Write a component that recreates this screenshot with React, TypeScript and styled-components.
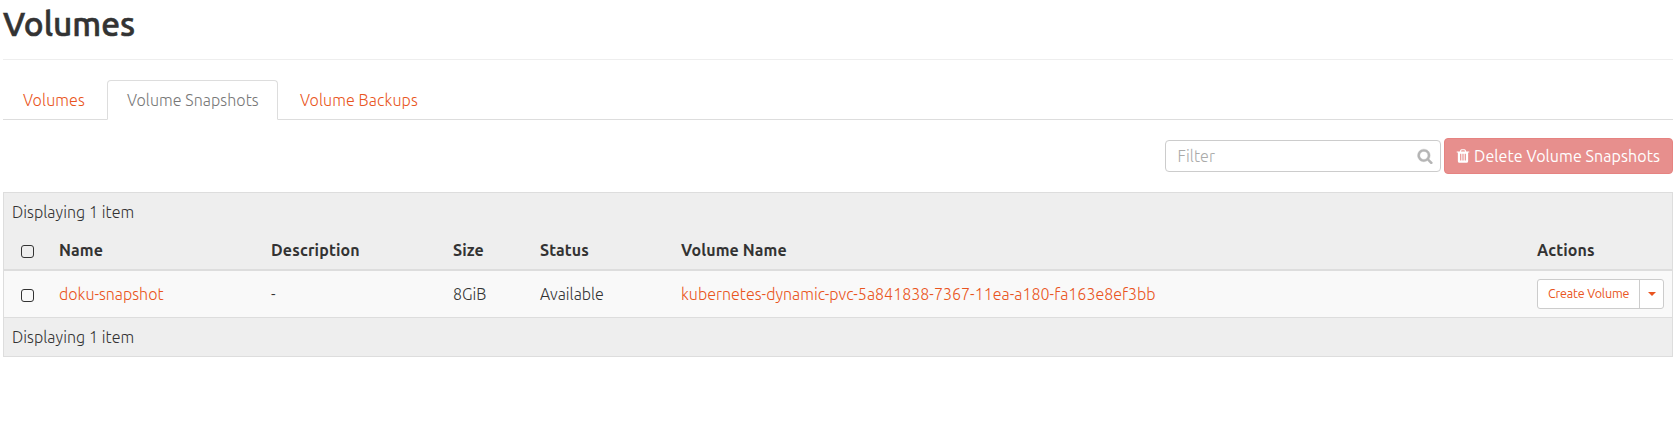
import React from "react";
import styled, { createGlobalStyle } from "styled-components";

const GlobalStyle = createGlobalStyle`
  * { box-sizing: border-box; }
  body {
    margin: 0;
    background: #fff;
    color: #333;
    font-family: Ubuntu, "Noto Sans", "Open Sans", sans-serif;
    font-size: 16px;
    font-weight: 300;
    line-height: 22px;
  }
`;

const Page = styled.main`
  padding: 0 2px 0 3px;
`;

const PageHeader = styled.header`
  height: 60px;
  padding-top: 4px;
  border-bottom: 1px solid #eee;
`;

const Title = styled.h1`
  margin: 0;
  font-size: 33.5px;
  font-weight: 500;
  line-height: 40px;
  -webkit-text-stroke: 0.6px #333;
`;

const Text = styled.span<{ $track?: number }>`
  display: inline-block;
  white-space: nowrap;
  letter-spacing: ${(p) => p.$track ?? 0}px;
`;

const Tabs = styled.nav`
  display: flex;
  gap: 2px;
  height: 40px;
  margin-top: 20px;
  border-bottom: 1px solid #ddd;
`;

const Tab = styled.a<{ $active?: boolean; $width: number }>`
  width: ${(p) => p.$width}px;
  height: 40px;
  padding: 8px 0 8px 19px;
  border: 1px solid ${(p) => (p.$active ? "#ddd" : "transparent")};
  border-bottom-color: ${(p) => (p.$active ? "#fff" : "transparent")};
  border-radius: 4px 4px 0 0;
  background: ${(p) => (p.$active ? "#fff" : "transparent")};
  background-clip: padding-box;
  color: ${(p) => (p.$active ? "#777" : "#e95420")};
`;

const Toolbar = styled.div`
  display: flex;
  justify-content: flex-end;
  align-items: center;
  gap: 3px;
  height: 36px;
  margin: 18px 0;
`;

const FilterBox = styled.div`
  display: flex;
  align-items: center;
  justify-content: space-between;
  width: 276px;
  height: 32px;
  padding: 0 7.5px 0 11.5px;
  border: 1px solid #ccc;
  border-radius: 4px;
`;

const FilterText = styled(Text)`
  color: #aaa;
`;

const SearchIcon = styled.svg`
  width: 16px;
  height: 16px;
  fill: #b5b5b5;
  stroke: #b5b5b5;
  stroke-width: 40px;
`;

const DeleteButton = styled.button`
  display: flex;
  align-items: center;
  width: 229px;
  height: 36px;
  padding: 0 0 0 12px;
  border: 1px solid #e68381;
  border-radius: 4px;
  background: #e78f8d;
  color: #fff;
  font: inherit;
  font-weight: 400;
`;

const TrashIcon = styled.svg`
  width: 16px;
  height: 16px;
  margin: 0 3px 0 -2px;
  fill: #fff;
`;

const Panel = styled.section`
  height: 165px;
  border: 1px solid #ddd;
  background: #eee;
`;

const Caption = styled.div`
  height: 38px;
  padding: 8px;
`;

const Row = styled.div<{ $kind: "head" | "body" }>`
  display: grid;
  grid-template-columns: 47px 212px 182px 87px 141px 856px 1fr;
  height: ${(p) => (p.$kind === "head" ? 40 : 47)}px;
  align-items: center;
  border-bottom: ${(p) => (p.$kind === "head" ? 2 : 1)}px solid #ddd;
  background: ${(p) => (p.$kind === "head" ? "#eee" : "#f9f9f9")};
  font-weight: ${(p) => (p.$kind === "head" ? 700 : 300)};
`;

const Cell = styled.div`
  padding-left: 8px;
`;

const Checkbox = styled.input`
  appearance: none;
  display: block;
  width: 13px;
  height: 13px;
  margin: 2px 0 0 9px;
  border: 1px solid #333;
  border-radius: 3px;
  background: transparent;
`;

const Link = styled(Text)`
  color: #e95420;
`;

const ButtonGroup = styled.div`
  display: flex;
  width: 127px;
  height: 30px;
  border: 1px solid #ccc;
  border-radius: 3px;
  background: #fff;
  color: #e95420;
  font-size: 12.5px;
  font-weight: 400;
  line-height: 27px;
`;

const CreateAction = styled.div`
  width: 102px;
  padding-left: 10px;
  border-right: 1px solid #ccc;
`;

const MenuToggle = styled.div`
  flex: 1;
  display: grid;
  place-items: center;
`;

const Caret = styled.i`
  border: 4px solid transparent;
  border-top-color: #e95420;
  border-bottom: 0;
`;

export default function App() {
  return (
    <>
      <GlobalStyle />
      <Page>
        <PageHeader>
          <Title><Text>Volumes</Text></Title>
        </PageHeader>
        <Tabs>
          <Tab $width={102}><Text $track={0.12}>Volumes</Text></Tab>
          <Tab $width={171} $active><Text $track={0.06}>Volume Snapshots</Text></Tab>
          <Tab $width={160}><Text $track={0.1}>Volume Backups</Text></Tab>
        </Tabs>
        <Toolbar>
          <FilterBox>
            <FilterText $track={0.1}>Filter</FilterText>
            <SearchIcon viewBox="0 0 1792 1792">
              <path d="M1216 832q0-185-131.5-316.5t-316.5-131.5-316.5 131.5-131.5 316.5 131.5 316.5 316.5 131.5 316.5-131.5 131.5-316.5zm512 832q0 52-38 90t-90 38q-54 0-90-38l-343-342q-179 124-399 124-143 0-273.5-55.5t-225-150-150-225-55.5-273.5 55.5-273.5 150-225 225-150 273.5-55.5 273.5 55.5 225 150 150 225 55.5 273.5q0 220-124 399l343 343q37 37 37 90z" />
            </SearchIcon>
          </FilterBox>
          <DeleteButton>
            <TrashIcon viewBox="0 0 1792 1792">
              <path d="M704 1376v-704q0-14-9-23t-23-9h-64q-14 0-23 9t-9 23v704q0 14 9 23t23 9h64q14 0 23-9t9-23zm256 0v-704q0-14-9-23t-23-9h-64q-14 0-23 9t-9 23v704q0 14 9 23t23 9h64q14 0 23-9t9-23zm256 0v-704q0-14-9-23t-23-9h-64q-14 0-23 9t-9 23v704q0 14 9 23t23 9h64q14 0 23-9t9-23zm-544-992h448l-48-117q-7-9-17-11h-317q-10 2-17 11zm928 32v64q0 14-9 23t-23 9h-96v948q0 83-47 143.5t-113 60.5h-832q-66 0-113-58.5t-47-141.5v-952h-96q-14 0-23-9t-9-23v-64q0-14 9-23t23-9h309l70-167q15-37 54-63t79-26h320q40 0 79 26t54 63l70 167h309q14 0 23 9t9 23z" />
            </TrashIcon>
            <Text $track={0.08}>Delete Volume Snapshots</Text>
          </DeleteButton>
        </Toolbar>
        <Panel>
          <Caption><Text $track={0.05}>Displaying 1 item</Text></Caption>
          <Row $kind="head">
            <Cell><Checkbox type="checkbox" /></Cell>
            <Cell><Text $track={0.1}>Name</Text></Cell>
            <Cell><Text $track={0.15}>Description</Text></Cell>
            <Cell><Text $track={0.15}>Size</Text></Cell>
            <Cell><Text $track={0.1}>Status</Text></Cell>
            <Cell><Text $track={0.1}>Volume Name</Text></Cell>
            <Cell><Text $track={0.13}>Actions</Text></Cell>
          </Row>
          <Row $kind="body">
            <Cell><Checkbox type="checkbox" /></Cell>
            <Cell><Link>doku-snapshot</Link></Cell>
            <Cell><Text>-</Text></Cell>
            <Cell><Text>8GiB</Text></Cell>
            <Cell><Text>Available</Text></Cell>
            <Cell><Link $track={0.02}>kubernetes-dynamic-pvc-5a841838-7367-11ea-a180-fa163e8ef3bb</Link></Cell>
            <Cell>
              <ButtonGroup>
                <CreateAction><Text $track={-0.15}>Create Volume</Text></CreateAction>
                <MenuToggle><Caret /></MenuToggle>
              </ButtonGroup>
            </Cell>
          </Row>
          <Caption><Text $track={0.05}>Displaying 1 item</Text></Caption>
        </Panel>
      </Page>
    </>
  );
}
